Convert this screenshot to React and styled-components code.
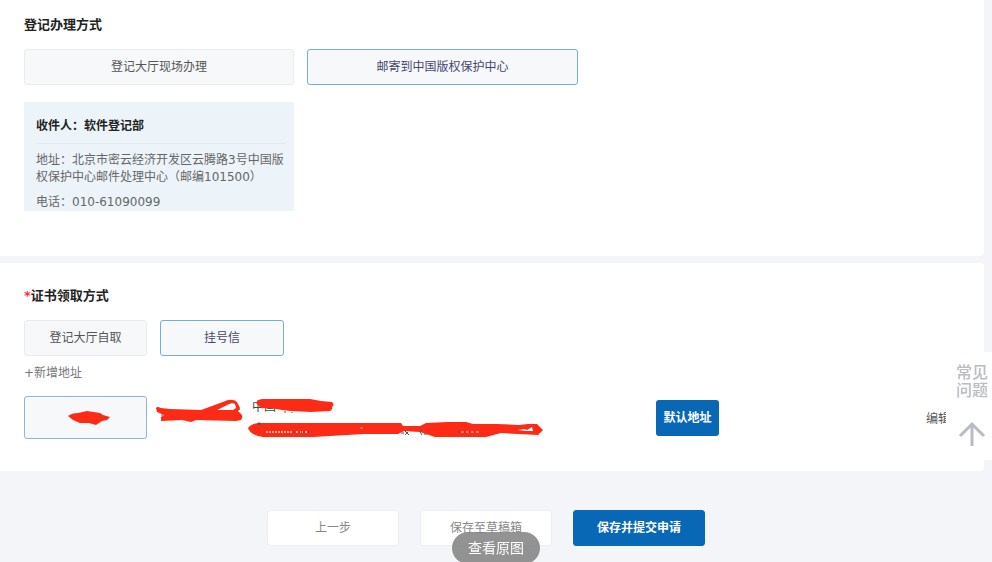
import React from 'react'
import styled, { createGlobalStyle } from 'styled-components'

const GlobalStyle = createGlobalStyle`
  body {
    margin: 0;
    background-color: #f3f5f8;
    color: #555;
    font-family: 'DejaVu Sans', 'Noto Sans CJK SC', sans-serif;
    font-size: 12px;
  }
  * {
    box-sizing: border-box;
  }
`

const App = () => {
  return (
    <>
      <GlobalStyle />
      <Main>
        <Panel>
          <Title>登记办理方式</Title>
          <Options>
            <Option $width={270}>登记大厅现场办理</Option>
            <Option $width={271} $active>
              邮寄到中国版权保护中心
            </Option>
          </Options>
          <Recipient>
            <h3>收件人：软件登记部</h3>
            <p>地址：北京市密云经济开发区云腾路3号中国版权保护中心邮件处理中心（邮编101500）</p>
            <p>电话：010-61090099</p>
          </Recipient>
        </Panel>

        <Panel>
          <Title>
            <span>*</span>证书领取方式
          </Title>
          <Options>
            <Option $width={123}>登记大厅自取</Option>
            <Option $width={124} $active>
              挂号信
            </Option>
          </Options>
          <AddLink href="#">+新增地址</AddLink>
          <AddressRow>
            <NameBox aria-label="收件人">
              <svg width="42" height="15" viewBox="0 0 42 15">
                <path
                  d="M0 5 Q4 2 10 2 L19 0 L32 2 L35 4 L42 6 L39 9 L34 10 L28 14 L21 12 L12 12 L5 9 Z"
                  fill="#fd2b16"
                />
              </svg>
            </NameBox>
            <Phone width="88" height="26" viewBox="0 0 88 26">
              <path d="M6 12 V17 M79 12 L84 10" stroke="#555" strokeWidth="1" />
              <path
                d="M0 9 Q1 7 5 9 L14 10 L45 11 L56 7 L72 1 Q80 0 82 5 L84 9 L82 12 L84 14 Q88 17 85 21 L80 22 L40 21 L35 23 L26 21 L5 22 L5 18 L8 16 L1 13 Z M61 11 L77 11 L80 9 L79 5 L76 4 L71 6 Z"
                fill="#fd2b16"
                fillRule="evenodd"
              />
            </Phone>
            <Address>
              <p>中国</p>
              <svg width="298" height="40" viewBox="0 0 298 40">
                <path
                  d="M8 4 Q10 0 15 0 L62 0 L73 2 L84 3 Q87 6 84 8 Q85 10 82 12 L63 13 L43 12 L34 11 L23 9 L13 9 Z"
                  fill="#fd2b16"
                />
                <path
                  d="M0 29 Q4 24 12 24 L153 24 L155 27 L172 27 L178 24 L200 23 L218 23 L225 25 L249 25 L271 26 L280 25 L289 25 L295 31 L290 36 L253 34 L238 38 L187 38 L172 33 L156 32 L150 35 L116 35 L65 38 L15 38 Q2 36 0 29 Z"
                  fill="#fd2b16"
                />
                <path d="M11 23 V26 M9 25 H13 M37 12 V14 M44 13 V14" stroke="#555" />
                <path d="M153 34 H156 M157 32 L161 36 M157 36 L160 33 M174 30 L172 33 L174 36 M176 35 H179" stroke="#555" fill="none" />
                <path d="M18 33 H62" stroke="#ffaa9e" strokeWidth="2" strokeDasharray="2 1" />
                <path d="M45 33 H62 M210 33 H235" stroke="#8e4842" strokeWidth="2" strokeDasharray="2 3" />
                <path d="M112 29 H117 M213 33 H232" stroke="#ffb5aa" strokeDasharray="3 2" />
                <path d="M270 31 L276 30 L279 31 L284 28 L285 32 L277 32 Z" fill="#fff" />
              </svg>
            </Address>
            <DefaultButton>默认地址</DefaultButton>
            <EditLink href="#">编辑</EditLink>
          </AddressRow>
        </Panel>
      </Main>

      <Actions>
        <ActionButton>上一步</ActionButton>
        <ActionButton>保存至草稿箱</ActionButton>
        <ActionButton $primary>保存并提交申请</ActionButton>
      </Actions>

      <SideBar>
        <a href="#">常见问题</a>
        <button aria-label="返回顶部">
          <svg width="28" height="26" viewBox="0 0 28 26" fill="none" stroke="#b9bcc3" strokeWidth="3">
            <path d="M2 15 L14 3 L26 15 M14 3 V25" />
          </svg>
        </button>
      </SideBar>
      <ViewOriginal>查看原图</ViewOriginal>
    </>
  )
}

const Main = styled.main`
  margin-right: 8px;
  display: grid;
  gap: 7px;
`

const Panel = styled.section`
  padding: 14px 24px 32px;
  background-color: #fff;
  border-radius: 0 4px 4px 0;
  &:first-child {
    padding-bottom: 45px;
    border-top-right-radius: 0;
  }
  & + & {
    padding-top: 22px;
  }
`

const Title = styled.h2`
  margin: 0 0 14px;
  font-size: 13px;
  font-weight: 700;
  line-height: 21px;
  color: #222;
  span {
    color: #ff2d3c;
  }
`

const Options = styled.div`
  display: flex;
  gap: 13px;
`

const Button = styled.button`
  padding: 0 0 3px;
  border: 0;
  border-radius: 3px;
  font-family: inherit;
  font-size: 12px;
  cursor: pointer;
`

const Option = styled(Button)`
  width: ${props => props.$width}px;
  height: 36px;
  background-color: #f6f8fa;
  border: 1px solid ${props => (props.$active ? '#78acd9' : '#e9ecef')};
  color: ${props => (props.$active ? '#45456f' : '#555')};
`

const Recipient = styled.div`
  width: 270px;
  margin-top: 17px;
  padding: 13px 8px 0 12px;
  background-color: #ecf4fa;
  line-height: 17px;
  color: #666;
  h3 {
    margin: 0 0 8px;
    padding-bottom: 6px;
    border-bottom: 1px solid #e2eaf0;
    font-size: 12px;
    line-height: 22px;
    color: #222;
  }
  p {
    margin: 0 0 8px;
  }
  p:last-child {
    margin: 0;
  }
`

const AddLink = styled.a`
  display: block;
  width: max-content;
  margin: 8px 0 14px;
  line-height: 18px;
  color: #777;
  text-decoration: none;
`

const AddressRow = styled.div`
  display: flex;
  align-items: center;
`

const NameBox = styled(Button)`
  width: 123px;
  height: 43px;
  padding: 2px 0 0 6px;
  background-color: #f6f8fa;
  border: 1px solid #8db5de;
  svg {
    display: block;
    margin: 0 auto;
  }
`

const Phone = styled.svg`
  margin: 0 4px 12px 9px;
`

const Address = styled.div`
  position: relative;
  flex: 0 1 408px;
  height: 40px;
  p {
    margin: 0;
    padding-left: 4px;
    line-height: 18px;
    color: #444;
  }
  svg {
    position: absolute;
    top: 1px;
    left: 0;
  }
`

const DefaultButton = styled(Button)`
  width: 63px;
  height: 36px;
  background-color: #0868b5;
  color: #fff;
  font-weight: 700;
`

const EditLink = styled.a`
  margin-left: auto;
  margin-right: 10px;
  color: #555;
  text-decoration: none;
`

const Actions = styled.footer`
  display: flex;
  justify-content: center;
  gap: 21px;
  padding: 39px 20px 16px 0;
`

const ActionButton = styled(Button)`
  width: 132px;
  height: 36px;
  border: 1px solid ${props => (props.$primary ? '#0868b5' : '#eceef1')};
  background-color: ${props => (props.$primary ? '#0868b5' : '#fff')};
  color: ${props => (props.$primary ? '#fff' : '#888')};
  font-weight: ${props => (props.$primary ? 700 : 400)};
`

const SideBar = styled.aside`
  position: fixed;
  top: 352px;
  right: 0;
  width: 46px;
  height: 108px;
  padding: 12px 4px 0 10px;
  background-color: #fff;
  a {
    display: block;
    font-size: 16px;
    font-weight: 500;
    line-height: 18px;
    color: #b9bcc3;
    text-decoration: none;
  }
  button {
    display: block;
    margin-top: 21px;
    padding: 0 2px;
    border: 0;
    background: none;
  }
`

const ViewOriginal = styled(Button)`
  position: fixed;
  bottom: -2px;
  left: 50%;
  width: 88px;
  height: 32px;
  margin-left: -44px;
  border-radius: 16px;
  background-color: rgba(128, 128, 128, 0.85);
  color: #fff;
  font-size: 14px;
`

export default App
